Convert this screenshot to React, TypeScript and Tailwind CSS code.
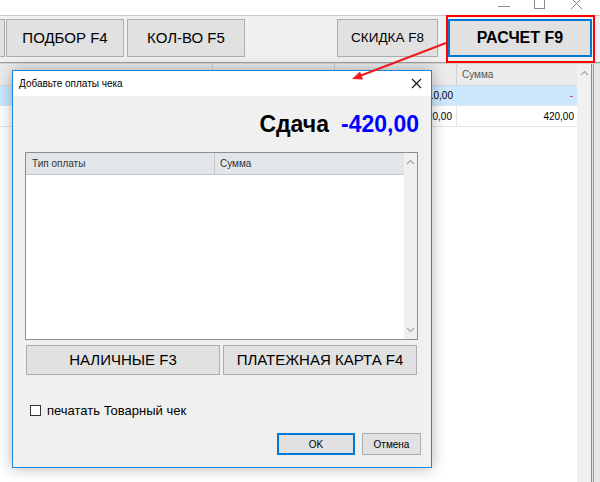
const font = "font-['Liberation_Sans',Arial,sans-serif]"

function ChevronUp({ className = "" }: { className?: string }) {
  return (
    <svg width="9" height="6" viewBox="0 0 9 6" className={className}>
      <path d="M1 5 L4.5 1.5 L8 5" fill="none" stroke="#a6a6a6" strokeWidth="1.2" />
    </svg>
  )
}

function ChevronDown({ className = "" }: { className?: string }) {
  return (
    <svg width="9" height="6" viewBox="0 0 9 6" className={className}>
      <path d="M1 1 L4.5 4.5 L8 1" fill="none" stroke="#a6a6a6" strokeWidth="1.2" />
    </svg>
  )
}

function ToolButton({ label, width, bold = false, className = "" }: { label: string; width: string; bold?: boolean; className?: string }) {
  return (
    <div
      className={`${width} h-[38px] flex items-center justify-center bg-[#e1e1e1] border border-[#adadad] ${
        bold ? "font-bold text-[16px]" : "text-[15px]"
      } ${className}`}
    >
      {label}
    </div>
  )
}

function PaymentDialog() {
  return (
    <div className="absolute left-[12px] top-[70px] w-[420px] h-[398px] flex flex-col border border-[#1c86d9] bg-[#f0f0f0] shadow-[0_0_14px_rgba(0,0,0,0.3)]">
      {/* title bar */}
      <div className="h-[25px] bg-white flex items-center justify-between pl-[6px] pr-[9px] text-[10px] text-black">
        <span>Добавьте оплаты чека</span>
        <svg width="11" height="11" viewBox="0 0 11 11">
          <path d="M1 1 L10 10 M10 1 L1 10" stroke="#111" strokeWidth="1.1" />
        </svg>
      </div>

      {/* change amount */}
      <div className="mt-[17px] pr-[12px] flex justify-end items-baseline text-[23px] leading-[23px] font-bold">
        <span className="text-black">Сдача</span>
        <span className="ml-[12px] text-[#0000ff]">-420,00</span>
      </div>

      {/* payments table */}
      <div className="mt-[16px] ml-[12px] w-[393px] h-[188px] border border-[#8e8e8e] bg-white flex">
        <div className="flex-1 flex flex-col">
          <div className="h-[22px] flex bg-[#e2e5ea] border-b border-[#c3c7cd] text-[10px] text-[#333]">
            <div className="w-[189px] border-r border-[#c3c7cd] flex items-center pl-[6px]">Тип оплаты</div>
            <div className="flex-1 flex items-center pl-[5px]">Сумма</div>
          </div>
        </div>
        <div className="w-[13px] bg-[#f0f0f0] flex flex-col items-center justify-between py-[6px]">
          <ChevronUp />
          <ChevronDown />
        </div>
      </div>

      {/* payment buttons */}
      <div className="mt-[5px] ml-[13px] flex gap-[3px]">
        <div className="w-[194px] h-[30px] flex items-center justify-center bg-[#e1e1e1] border border-[#adadad] text-[15px]">
          НАЛИЧНЫЕ F3
        </div>
        <div className="w-[194px] h-[30px] flex items-center justify-center bg-[#e1e1e1] border border-[#adadad] text-[15px]">
          ПЛАТЕЖНАЯ КАРТА F4
        </div>
      </div>

      {/* print option */}
      <div className="mt-[30px] ml-[17px] flex items-center h-[11px]">
        <div className="w-[11px] h-[11px] border border-[#333] bg-white" />
        <span className="ml-[6px] text-[13px] leading-none">печатать Товарный чек</span>
      </div>

      {/* footer */}
      <div className="mt-[17px] mr-[10px] flex justify-end gap-[7px] text-[10px]">
        <div className="w-[78px] h-[22px] flex items-center justify-center bg-[#e1e1e1] border-2 border-[#0078d7]">OK</div>
        <div className="w-[59px] h-[22px] flex items-center justify-center bg-[#e1e1e1] border border-[#adadad]">Отмена</div>
      </div>
    </div>
  )
}

export default function App() {
  return (
    <div className={`relative w-[600px] h-[482px] overflow-hidden bg-white text-black ${font}`}>
      <div className="flex flex-col h-full">
        {/* window title bar */}
        <div className="h-[15px] bg-white flex justify-end">
          <svg width="110" height="15" viewBox="0 0 110 15">
            <path d="M8 6.5 H20" stroke="#8a8a8a" strokeWidth="1" />
            <rect x="44.5" y="-1.5" width="10" height="10" fill="none" stroke="#8a8a8a" strokeWidth="1" />
            <path d="M81 -2 L92 9 M92 -2 L81 9" stroke="#8a8a8a" strokeWidth="1" />
          </svg>
        </div>
        <div className="h-px bg-[#c8c8c8]" />

        {/* toolbar */}
        <div className="h-[46px] bg-[#f0f0f0] flex items-start pt-[3px]">
          <div className="w-[5px] h-[38px] bg-[#e1e1e1] border-y border-r border-[#adadad]" />
          <ToolButton label="ПОДБОР F4" width="w-[118px]" className="ml-[1px]" />
          <ToolButton label="КОЛ-ВО F5" width="w-[118px]" className="ml-[3px]" />
          <ToolButton label="СКИДКА F8" width="w-[101px]" className="ml-[92px] !text-[13.5px]" />
          <div className="ml-[10px] w-[144px] h-[38px] flex items-center justify-center bg-[#e1e1e1] border-2 border-[#0078d7] font-bold text-[16px]">
            РАСЧЕТ F9
          </div>
        </div>
        <div className="h-px bg-[#a0a0a0]" />
        <div className="h-px bg-[#d4d4d4]" />

        {/* grid */}
        <div className="flex-1 flex">
          <div className="w-[577px] flex flex-col bg-white">
            <div className="h-[22px] grid grid-cols-[213px_122px_122px_1fr] bg-[#ebebeb] border-b border-[#d6d6d6] text-[10px] text-[#555]">
              <div className="border-r border-[#d0d0d0]" />
              <div className="border-r border-[#d0d0d0]" />
              <div className="border-r border-[#d0d0d0]" />
              <div className="flex items-center pl-[5px]">Сумма</div>
            </div>
            <div className="h-[20px] grid grid-cols-[213px_122px_122px_1fr] bg-[#cce8ff] border-b border-[#e4e4e4] text-[10px]">
              <div />
              <div />
              <div className="flex items-center justify-end pr-[4px]">10,00</div>
              <div className="flex items-center justify-end pr-[4px] text-[#e81123]">-</div>
            </div>
            <div className="h-[21px] grid grid-cols-[213px_122px_122px_1fr] bg-white border-b border-[#e4e4e4] text-[10px]">
              <div className="border-r border-[#e4e4e4]" />
              <div className="border-r border-[#e4e4e4]" />
              <div className="border-r border-[#e4e4e4] flex items-center justify-end pr-[4px]">420,00</div>
              <div className="flex items-center justify-end pr-[3px]">420,00</div>
            </div>
          </div>
          <div className="w-[14px] bg-[#f0f0f0] flex justify-center pt-[6px]">
            <ChevronUp />
          </div>
          <div className="w-px bg-[#8c8c8c]" />
          <div className="w-px bg-[#e4e4e4]" />
          <div className="w-px bg-[#9c9c9c]" />
          <div className="flex-1 bg-[#e6e6e6]" />
        </div>
      </div>

      <PaymentDialog />

      {/* annotation: red box and arrow */}
      <div className="absolute left-[446px] top-[15px] w-[149px] h-[48px] border-2 border-[#ff0000]" />
      <svg className="absolute left-0 top-0 pointer-events-none" width="600" height="482" viewBox="0 0 600 482">
        <line x1="446" y1="43" x2="361" y2="75.5" stroke="#ee1c1c" strokeWidth="2" />
        <polygon points="352,79 363,79.5 360,71.5" fill="#ee1c1c" />
      </svg>
    </div>
  )
}
